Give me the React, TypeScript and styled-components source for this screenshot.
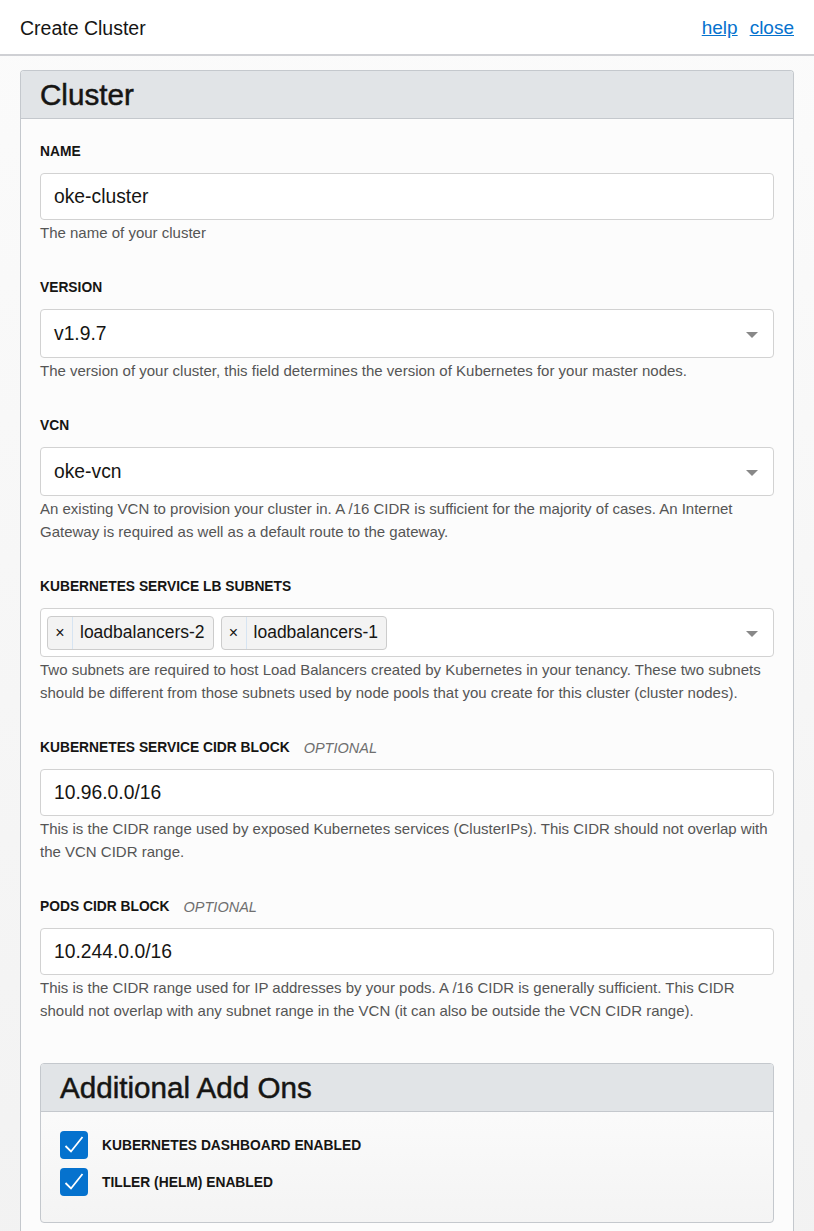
import React from 'react';
import styled, { createGlobalStyle } from 'styled-components';

const GlobalStyle = createGlobalStyle`
  html, body {
    margin: 0;
    padding: 0;
    background: #f7f7f7;
    font-family: "Liberation Sans", Arial, Helvetica, sans-serif;
    color: #161513;
  }
  * { box-sizing: border-box; }
`;

const Page = styled.div`
  width: 814px;
  min-height: 1231px;
  display: flex;
  flex-direction: column;
  background: linear-gradient(#fbfbfb, #f2f2f2);
`;

const Header = styled.header`
  height: 56px;
  background: #fff;
  border-bottom: 2px solid #cfd0d4;
  display: flex;
  align-items: center;
  justify-content: space-between;
  padding: 2px 20px 0;
`;

const Title = styled.h1`
  margin: 0;
  font-size: 19.5px;
  font-weight: normal;
  color: #161513;
`;

const Links = styled.nav`
  display: flex;
  gap: 12px;
`;

const Link = styled.a`
  font-size: 19px;
  color: #0572ce;
  text-decoration: underline;
  cursor: pointer;
`;

const Body = styled.main`
  padding: 14px 20px 0;
`;

const Panel = styled.section<{ $nested?: boolean }>`
  border: 1px solid #c4c8cd;
  border-radius: 4px;
  background: ${p => (p.$nested ? 'linear-gradient(#fdfdfd, #f4f4f4)' : '#fcfcfc')};
  ${p => (p.$nested ? 'margin-top: 5px;' : 'border-bottom: none; border-bottom-left-radius: 0; border-bottom-right-radius: 0;')}
  overflow: hidden;
`;

const PanelHead = styled.div`
  height: 48px;
  background: #e1e4e7;
  border-bottom: 1px solid #c4c8cd;
  display: flex;
  align-items: center;
  padding: 0 19px;
`;

const PanelTitle = styled.h2`
  margin: 0;
  font-size: 29.6px;
  font-weight: normal;
  color: #161513;
  -webkit-text-stroke: 0.5px #161513;
`;

const PanelBody = styled.div<{ $nested?: boolean }>`
  padding: ${p => (p.$nested ? '19px 19px 26px' : '25px 19px 38px')};
  display: flex;
  flex-direction: column;
  gap: ${p => (p.$nested ? '9px' : '0')};
`;

const Field = styled.div`
  display: flex;
  flex-direction: column;
  margin-bottom: 36px;
`;

const Label = styled.label`
  font-size: 13.8px;
  font-weight: bold;
  color: #161513;
  line-height: 16px;
  margin-bottom: 13px;
  display: flex;
  gap: 14px;
`;

const Optional = styled.span`
  font-weight: normal;
  font-style: italic;
  color: #6f6f6f;
  font-size: 14.5px;
  text-transform: uppercase;
`;

const Input = styled.div`
  height: 47px;
  border: 1px solid #d2d2d2;
  border-radius: 4px;
  background: #fff;
  display: flex;
  align-items: center;
  padding: 0 13px;
  font-size: 19.3px;
  color: #161513;
  position: relative;
`;

const Select = styled(Input)`
  height: 49px;
  padding-right: 40px;
`;

const Caret = styled.span`
  position: absolute;
  right: 15px;
  top: 50%;
  margin-top: -2px;
  width: 0;
  height: 0;
  border-left: 6px solid transparent;
  border-right: 6px solid transparent;
  border-top: 6px solid #888;
`;

const Chips = styled(Select)`
  padding-left: 6px;
  gap: 7px;
`;

const Chip = styled.span`
  height: 34px;
  border: 1px solid #cccccc;
  border-radius: 4px;
  background: #f3f3f3;
  display: flex;
  align-items: center;
  font-size: 17.5px;
`;

const ChipX = styled.span`
  width: 25px;
  height: 100%;
  display: flex;
  align-items: center;
  justify-content: center;
  font-size: 16px;
  border-right: 1px solid #d6e4f2;
`;

const ChipText = styled.span`
  padding: 0 8px 0 7px;
`;

const Help = styled.p`
  margin: 1px 0 0;
  font-size: 15px;
  line-height: 23px;
  color: #555;
`;

const CheckRow = styled.div`
  display: flex;
  align-items: center;
  gap: 14px;
`;

const Box = styled.span`
  width: 28px;
  height: 28px;
  border-radius: 4px;
  background: #0572ce;
  display: flex;
  align-items: center;
  justify-content: center;
`;

const CheckLabel = styled.span`
  font-size: 13.8px;
  font-weight: bold;
  color: #161513;
`;

const Check = ({ label }: { label: string }) => (
  <CheckRow>
    <Box>
      <svg width="24" height="24" viewBox="0 0 24 24">
        <path d="M3.5 13 L9 18.5 L20.5 4" fill="none" stroke="#fff" strokeWidth="1.8" />
      </svg>
    </Box>
    <CheckLabel>{label}</CheckLabel>
  </CheckRow>
);

export default function App() {
  return (
    <Page>
      <GlobalStyle />
      <Header>
        <Title>Create Cluster</Title>
        <Links>
          <Link>help</Link>
          <Link>close</Link>
        </Links>
      </Header>
      <Body>
        <Panel>
          <PanelHead>
            <PanelTitle>Cluster</PanelTitle>
          </PanelHead>
          <PanelBody>
            <Field>
              <Label>NAME</Label>
              <Input>oke-cluster</Input>
              <Help>The name of your cluster</Help>
            </Field>
            <Field>
              <Label>VERSION</Label>
              <Select>
                v1.9.7
                <Caret />
              </Select>
              <Help>The version of your cluster, this field determines the version of Kubernetes for your master nodes.</Help>
            </Field>
            <Field>
              <Label>VCN</Label>
              <Select>
                oke-vcn
                <Caret />
              </Select>
              <Help>
                An existing VCN to provision your cluster in. A /16 CIDR is sufficient for the majority of cases. An Internet
                Gateway is required as well as a default route to the gateway.
              </Help>
            </Field>
            <Field>
              <Label>KUBERNETES SERVICE LB SUBNETS</Label>
              <Chips>
                <Chip>
                  <ChipX>×</ChipX>
                  <ChipText>loadbalancers-2</ChipText>
                </Chip>
                <Chip>
                  <ChipX>×</ChipX>
                  <ChipText>loadbalancers-1</ChipText>
                </Chip>
                <Caret />
              </Chips>
              <Help>
                Two subnets are required to host Load Balancers created by Kubernetes in your tenancy. These two subnets
                should be different from those subnets used by node pools that you create for this cluster (cluster nodes).
              </Help>
            </Field>
            <Field>
              <Label>
                KUBERNETES SERVICE CIDR BLOCK <Optional>Optional</Optional>
              </Label>
              <Input>10.96.0.0/16</Input>
              <Help>
                This is the CIDR range used by exposed Kubernetes services (ClusterIPs). This CIDR should not overlap with
                the VCN CIDR range.
              </Help>
            </Field>
            <Field>
              <Label>
                PODS CIDR BLOCK <Optional>Optional</Optional>
              </Label>
              <Input>10.244.0.0/16</Input>
              <Help>
                This is the CIDR range used for IP addresses by your pods. A /16 CIDR is generally sufficient. This CIDR
                should not overlap with any subnet range in the VCN (it can also be outside the VCN CIDR range).
              </Help>
            </Field>
            <Panel $nested>
              <PanelHead>
                <PanelTitle>Additional Add Ons</PanelTitle>
              </PanelHead>
              <PanelBody $nested>
                <Check label="KUBERNETES DASHBOARD ENABLED" />
                <Check label="TILLER (HELM) ENABLED" />
              </PanelBody>
            </Panel>
          </PanelBody>
        </Panel>
      </Body>
    </Page>
  );
}
